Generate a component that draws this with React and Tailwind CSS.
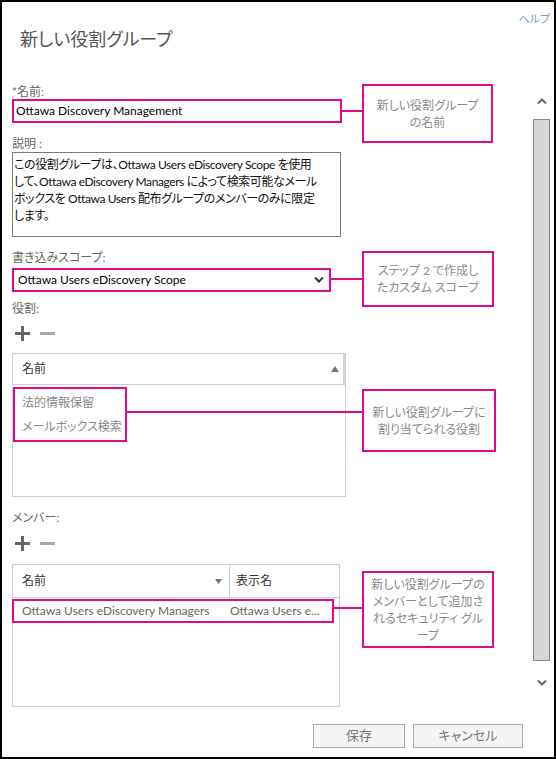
import React from "react";

function PlusMinus() {
  return (
    <div className="flex items-center gap-[10px] pl-[3px] h-[14px]">
      <svg width="15" height="15" viewBox="0 0 15 15">
        <rect x="6" y="0" width="3" height="15" fill="#666" />
        <rect x="0" y="6" width="15" height="3" fill="#666" />
      </svg>
      <svg width="15" height="15" viewBox="0 0 15 15">
        <rect x="0" y="6" width="15" height="3" fill="#a3aaab" />
      </svg>
    </div>
  );
}

function Chevron({ up, color = "#666" }) {
  return (
    <svg width="10" height="6" viewBox="0 0 10 6">
      <path
        d={up ? "M1 5.5 L5 1.5 L9 5.5" : "M1 0.5 L5 4.5 L9 0.5"}
        fill="none"
        stroke={color}
        strokeWidth="2"
      />
    </svg>
  );
}

function Callout({ className, children }) {
  return (
    <div
      className={`absolute border-2 border-[#e5088b] bg-white flex items-center justify-center text-center text-[12px] leading-[17px] text-[#8a8a8a] ${className}`}
    >
      <p className="whitespace-nowrap">{children}</p>
    </div>
  );
}

function Line({ className }) {
  return <div className={`absolute h-[2px] bg-[#e5088b] ${className}`} />;
}

export default function App() {
  return (
    <div className="relative w-[556px] h-[759px] border-2 border-black bg-white flex flex-col overflow-hidden font-['Lato','Noto_Sans_CJK_JP',sans-serif] [font-feature-settings:'palt']">
      <div className="flex justify-end pr-[4px] pt-[10px]">
        <span className="text-[11px] leading-[14px] text-[#6b9fd3]">ヘルプ</span>
      </div>
      <h1 className="ml-[18px] mt-[2px] text-[18px] leading-[22px] text-[#555]">
        新しい役割グループ
      </h1>

      <div className="flex flex-1">
        <div className="flex-1 pl-[10px] flex flex-col">
          <label className="mt-[34px] text-[12px] leading-[15px] text-[#666]">*名前:</label>
          <div className="w-[330px] h-[24px] border-2 border-[#e5088b] flex items-center pl-[2px] text-[12px] text-black">
            Ottawa Discovery Management
          </div>

          <label className="mt-[13px] text-[12px] leading-[15px] text-[#666]">説明 :</label>
          <div className="mt-[1px] w-[329px] h-[85px] border border-[#7a7a7a] pl-[1px] pt-[3px] text-[12px] leading-[17px] tracking-[-0.4px] text-[#111] whitespace-nowrap overflow-hidden">
            この役割グループは、Ottawa Users eDiscovery Scope を使用
            <br />
            して、Ottawa eDiscovery Managers によって検索可能なメール
            <br />
            ボックスを Ottawa Users 配布グループのメンバーのみに限定
            <br />
            します。
          </div>

          <label className="mt-[13px] text-[12px] leading-[15px] text-[#666]">書き込みスコープ:</label>
          <div className="mt-[3px] w-[319px] h-[24px] border-2 border-[#e5088b] flex items-center justify-between pl-[4px] pr-[5px] text-[12px] text-black">
            <span>Ottawa Users eDiscovery Scope</span>
            <Chevron color="#333" />
          </div>

          <label className="mt-[9px] text-[12px] leading-[15px] text-[#666]">役割:</label>
          <div className="mt-[10px]">
            <PlusMinus />
          </div>

          <div className="mt-[13px] w-[334px] h-[144px] border border-[#c9ced1] flex flex-col">
            <div className="h-[31px] border-b border-[#c9ced1] border-r-2 border-r-[#d0d4d6] flex items-center justify-between pl-[9px] pr-[4px] text-[12px] text-[#333]">
              <span>名前</span>
              <svg width="8" height="6" viewBox="0 0 8 6">
                <path d="M0 6 L4 0 L8 6 Z" fill="#777" />
              </svg>
            </div>
            <div className="mt-[2px] w-[114px] h-[55px] border-2 border-[#e5088b] flex flex-col justify-center gap-[8px] pl-[7px] text-[12px] leading-[16px] text-[#888] whitespace-nowrap">
              <span>法的情報保留</span>
              <span>メールボックス検索</span>
            </div>
          </div>

          <label className="mt-[13px] text-[12px] leading-[15px] text-[#666]">メンバー:</label>
          <div className="mt-[11px]">
            <PlusMinus />
          </div>

          <div className="mt-[14px] w-[328px] h-[143px] border border-[#c9ced1] flex flex-col">
            <div className="h-[33px] border-b border-[#c9ced1] flex text-[12px] text-[#333]">
              <div className="w-[217px] border-r border-[#c9ced1] flex items-center justify-between pl-[9px] pr-[7px]">
                <span>名前</span>
                <svg width="7" height="5" viewBox="0 0 7 5">
                  <path d="M0 0 L7 0 L3.5 5 Z" fill="#777" />
                </svg>
              </div>
              <div className="flex items-center pl-[6px]">表示名</div>
            </div>
            <div className="mt-[1px] -ml-[1px] w-[322px] h-[24px] border-2 border-[#e5088b] flex items-center text-[12px] text-[#666] whitespace-nowrap">
              <span className="w-[216px] pl-[8px]">Ottawa Users eDiscovery Managers</span>
              <span>Ottawa Users e...</span>
            </div>
          </div>

          <div className="mt-[17px] flex justify-end gap-[8px] pr-[10px]">
            <button className="w-[92px] h-[24px] bg-[#f4f4f4] border border-[#a9a9a9] text-[13px] text-[#777]">
              保存
            </button>
            <button className="w-[110px] h-[24px] bg-[#f4f4f4] border border-[#a9a9a9] text-[13px] text-[#777]">
              キャンセル
            </button>
          </div>
        </div>

        <div className="w-[17px] mr-[4px] flex flex-col items-center">
          <div className="mt-[48px]">
            <Chevron up />
          </div>
          <div className="mt-[15px] w-[17px] h-[542px] bg-[#d6d6d6] border border-[#8a8a8a]" />
          <div className="mt-[19px]">
            <Chevron />
          </div>
        </div>
      </div>

      <Line className="left-[340px] top-[108px] w-[22px]" />
      <Callout className="left-[360px] top-[82px] w-[131px] h-[59px]">
        新しい役割グループ
        <br />
        の名前
      </Callout>

      <Line className="left-[329px] top-[276px] w-[33px]" />
      <Callout className="left-[360px] top-[249px] w-[132px] h-[56px]">
        ステップ 2 で作成し
        <br />
        たカスタム スコープ
      </Callout>

      <Line className="left-[125px] top-[409px] w-[237px]" />
      <Callout className="left-[360px] top-[387px] w-[134px] h-[63px]">
        新しい役割グループに
        <br />
        割り当てられる役割
      </Callout>

      <Line className="left-[331px] top-[605px] w-[31px]" />
      <Callout className="left-[360px] top-[569px] w-[132px] h-[77px]">
        新しい役割グループの
        <br />
        メンバーとして追加さ
        <br />
        れるセキュリティ グル
        <br />
        ープ
      </Callout>
    </div>
  );
}
